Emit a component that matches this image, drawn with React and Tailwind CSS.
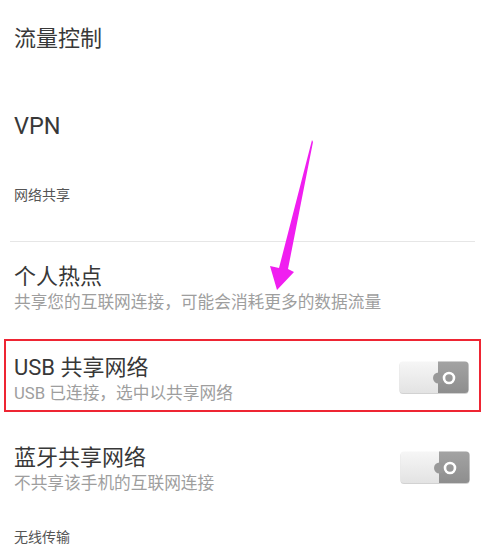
import React from 'react'

function Toggle() {
    return (
        <div className="w-[70px] h-[33px] shrink-0">
            <svg width="70" height="33" viewBox="0 0 70 33">
                <defs>
                    <linearGradient id="lite" x1="0" y1="0" x2="0" y2="1">
                        <stop offset="0" stopColor="#f6f6f6" />
                        <stop offset="1" stopColor="#e3e3e3" />
                    </linearGradient>
                    <linearGradient id="dark" x1="0" y1="0" x2="0" y2="1">
                        <stop offset="0" stopColor="#a3a3a3" />
                        <stop offset="1" stopColor="#8e8e8e" />
                    </linearGradient>
                </defs>
                <rect x="0.5" y="1" width="69" height="32" rx="3.5" fill="#d2d2d2" />
                <rect x="0.5" y="0.5" width="69" height="31.5" rx="3.5" fill="url(#lite)" />
                <path d="M39 0.5 H66 A3.5 3.5 0 0 1 69.5 4 V28.5 A3.5 3.5 0 0 1 66 32 H39 Z" fill="url(#dark)" />
                <circle cx="39.5" cy="17" r="5.5" fill="#999" />
                <circle cx="50" cy="17" r="5" fill="none" stroke="#ffffff" strokeWidth="2.6" />
            </svg>
        </div>
    )
}

function Row({ title, sub, toggle }) {
    return (
        <div className="flex items-start justify-between">
            <div className="flex flex-col">
                <div className="text-[22px] leading-[26px] text-[#383838]">{title}</div>
                <div className="text-[16.7px] leading-[26px] text-[#9e9e9e]">{sub}</div>
            </div>
            {toggle && <div className="mt-[6px]"><Toggle /></div>}
        </div>
    )
}

export default function App() {
    return (
        <div className="relative w-[495px] h-[545px] overflow-hidden bg-white" style={{ fontFamily: "Roboto, 'Noto Sans CJK SC', sans-serif" }}>
            <div className="flex flex-col">
                <div className="h-[77px] flex items-center pl-[14px] text-[22px] text-[#383838]">流量控制</div>
                <div className="h-[100px] flex items-center pl-[14px] text-[23.5px] text-[#383838]">VPN</div>
                <div className="h-[36px] flex items-center pl-[14px] text-[14px] text-[#555]">网络共享</div>
                <div className="mt-[28px] mx-[10px] mr-[20px] h-px bg-[#e6e6e6]" />
                <div className="pt-[22px] pl-[14px]">
                    <Row title="个人热点" sub="共享您的互联网连接，可能会消耗更多的数据流量" />
                </div>
                <div className="mt-[23px] ml-[4px] w-[477px] h-[73px] border-2 border-[#ee2533] pl-[8px] pr-[10px] pt-[14px]">
                    <Row title="USB 共享网络" sub="USB 已连接，选中以共享网络" toggle />
                </div>
                <div className="mt-[33px] pl-[14px] pr-[25px]">
                    <Row title="蓝牙共享网络" sub="不共享该手机的互联网连接" toggle />
                </div>
                <div className="mt-[32px] pl-[14px] text-[14px] leading-[16px] text-[#555]">无线传输</div>
            </div>
            <svg className="absolute left-0 top-0" width="495" height="545" viewBox="0 0 495 545">
                <polygon points="312,140 313,142 288,269 294,272 277,290 270,266 279,268" fill="#f01ef0" />
            </svg>
        </div>
    )
}
